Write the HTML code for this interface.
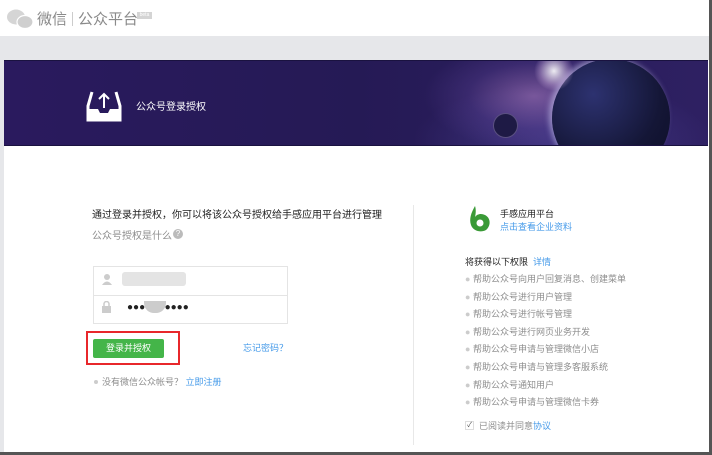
<!DOCTYPE html>
<html><head><meta charset="utf-8"><style>
*{margin:0;padding:0;box-sizing:border-box}
body{width:712px;height:455px;overflow:hidden;background:#fff;font-family:"Liberation Sans","Noto Sans CJK SC",sans-serif;position:relative}
.a{position:absolute;white-space:nowrap}
.bl{color:#459ae9}
.g{color:#8d8d8d}
</style></head><body>
<div class="a" style="left:0;top:0;width:712px;height:36px;background:#fff"></div>
<svg class="a" style="left:6px;top:8px" width="28" height="22" viewBox="0 0 28 22"><ellipse cx="10" cy="9" rx="9" ry="7.5" fill="#d5d5d5"/><ellipse cx="19" cy="14" rx="8" ry="6.5" fill="#cfcfcf" stroke="#fff" stroke-width="1.2"/></svg>
<div class="a" style="left:37px;top:8px;font-size:15px;color:#8a8a8a">微信</div>
<div class="a" style="left:72px;top:12px;width:1px;height:14px;background:#ccc"></div>
<div class="a" style="left:78px;top:8px;font-size:15px;color:#8a8a8a">公众平台</div>
<div class="a" style="left:137px;top:12px;width:15px;height:7px;background:#d4d4d4;font-size:5px;color:#fff;text-align:center;line-height:7px">beta</div>
<div class="a" style="left:0;top:36px;width:712px;height:24px;background:#e6e7ea"></div>
<div class="a" style="left:0;top:60px;width:4px;height:392px;background:#e6e7ea"></div>
<div class="a" style="left:4px;top:60px;width:704px;height:86px;overflow:hidden;border-top:1px solid #1a1240;border-bottom:1px solid #1a1240;background:radial-gradient(ellipse 110px 55px at 530px 35px,rgba(180,130,200,.55),rgba(110,80,170,.25) 60%,transparent),radial-gradient(ellipse 150px 60px at 560px 80px,rgba(90,80,170,.5),transparent),linear-gradient(90deg,#2a1a5e,#251a55 50%,#2e2062)">
<div class="a" style="left:548px;top:-2px;width:118px;height:118px;border-radius:50%;background:radial-gradient(circle at 35% 30%,#2d3270,#141636 60%,#0d0e26);box-shadow:-3px -2px 6px rgba(220,220,255,.5)"></div>
<div class="a" style="left:530px;top:-10px;width:40px;height:40px;border-radius:50%;background:radial-gradient(circle,rgba(255,255,255,.9),rgba(230,200,240,.3) 50%,transparent 70%)"></div>
<div class="a" style="left:489px;top:52px;width:25px;height:25px;border-radius:50%;background:#1e1a45;border:1px solid #5a5080"></div>
</div>
<svg class="a" style="left:86px;top:88px" width="36" height="34" viewBox="0 0 36 34"><path d="M6 4 L2 18 V32 H34 V18 L30 4" fill="none" stroke="#fff" stroke-width="3"/><path d="M2 21 H12 L14 25 H22 L24 21 H34 V32 H2Z" fill="#fff"/><path d="M18 20 V6 M13 11 L18 6 L23 11" stroke="#fff" stroke-width="2" fill="none"/></svg>
<div class="a" style="left:136px;top:98px;font-size:10px;color:#fff">公众号登录授权</div>
<div class="a" style="left:709px;top:0;width:3px;height:455px;background:#555"></div>
<div class="a" style="left:0;top:452px;width:712px;height:3px;background:#555"></div>
<div class="a" style="left:92px;top:206px;font-size:10px;color:#222">通过登录并授权，你可以将该公众号授权给手感应用平台进行管理</div>
<div class="a g" style="left:92px;top:227px;font-size:10px">公众号授权是什么</div>
<div class="a" style="left:173px;top:229px;width:10px;height:10px;border-radius:50%;background:#bbb;color:#fff;font-size:8px;text-align:center;line-height:10px">?</div>
<div class="a" style="left:93px;top:266px;width:195px;height:58px;border:1px solid #e4e4e4"></div>
<div class="a" style="left:94px;top:295px;width:193px;height:1px;background:#e4e4e4"></div>
<svg class="a" style="left:102px;top:273px" width="10" height="12"><circle cx="5" cy="4" r="3" fill="#ccc"/><path d="M0 12 Q5 5 10 12Z" fill="#ccc"/></svg>
<div class="a" style="left:122px;top:272px;width:64px;height:14px;background:#e4e4e4;border-radius:3px"></div>
<svg class="a" style="left:102px;top:301px" width="9" height="12"><rect x="0" y="5" width="9" height="7" fill="#ccc"/><path d="M2 5 V3 A2.5 2.5 0 0 1 7 3 V5" stroke="#ccc" fill="none" stroke-width="1.5"/></svg>
<div class="a" style="left:127px;top:302px;font-size:10px;color:#222">●●●&nbsp;&nbsp;&nbsp;&nbsp;&nbsp;&nbsp;&nbsp;●●●●</div>
<div class="a" style="left:144px;top:301px;width:22px;height:12px;background:#ccc;border-radius:0 0 10px 10px"></div>
<div class="a" style="left:86px;top:331px;width:94px;height:34px;border:2px solid #e8272b"></div>
<div class="a" style="left:93px;top:339px;width:71px;height:19px;background:#44b549;border-radius:2px;color:#fff;font-size:9px;text-align:center;line-height:19px">登录并授权</div>
<div class="a bl" style="left:243px;top:341px;font-size:9px">忘记密码？</div>
<div class="a" style="left:94px;top:380px;width:4px;height:4px;border-radius:50%;background:#ccc"></div>
<div class="a g" style="left:102px;top:375px;font-size:9px">没有微信公众帐号？ <span class="bl">立即注册</span></div>
<div class="a" style="left:413px;top:205px;width:1px;height:240px;background:#e8e8e8"></div>
<svg class="a" style="left:469px;top:205px" width="22" height="28" viewBox="0 0 22 28"><path d="M6 1 C2 8 0 14 2 20 C4 26 12 28 17 25 C22 21 22 13 16 10 C12 8 8 9 6 12 C7 8 7 4 6 1Z" fill="#3a9a37"/><circle cx="11" cy="18" r="3.5" fill="#fff"/></svg>
<div class="a" style="left:500px;top:207px;font-size:9px;color:#222">手感应用平台</div>
<div class="a bl" style="left:500px;top:220px;font-size:9px">点击查看企业资料</div>
<div class="a" style="left:465px;top:255px;font-size:9px;color:#222">将获得以下权限 <span class="bl">&nbsp;详情</span></div>
<div class="a g" style="left:465px;top:271px;font-size:9px;line-height:17.6px">
<div><span style="color:#ccc">● </span>帮助公众号向用户回复消息、创建菜单</div>
<div><span style="color:#ccc">● </span>帮助公众号进行用户管理</div>
<div><span style="color:#ccc">● </span>帮助公众号进行帐号管理</div>
<div><span style="color:#ccc">● </span>帮助公众号进行网页业务开发</div>
<div><span style="color:#ccc">● </span>帮助公众号申请与管理微信小店</div>
<div><span style="color:#ccc">● </span>帮助公众号申请与管理多客服系统</div>
<div><span style="color:#ccc">● </span>帮助公众号通知用户</div>
<div><span style="color:#ccc">● </span>帮助公众号申请与管理微信卡券</div>
</div>
<div class="a" style="left:465px;top:421px;width:9px;height:9px;border:1px solid #ddd;font-size:7px;line-height:8px;text-align:center;color:#444">✓</div>
<div class="a g" style="left:479px;top:419px;font-size:9px">已阅读并同意<span class="bl">协议</span></div>
</body></html>
